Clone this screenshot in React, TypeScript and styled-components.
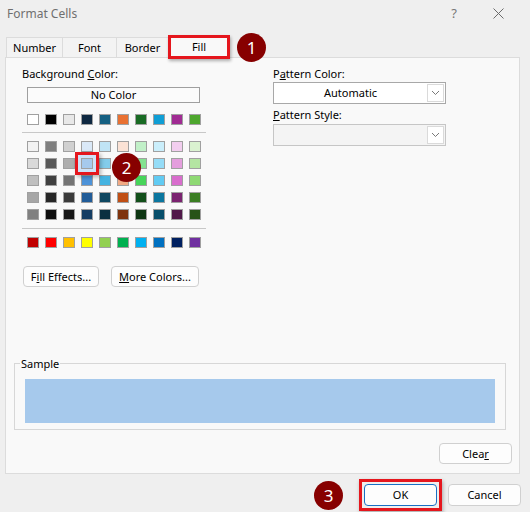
import React from 'react';
import styled, { createGlobalStyle } from 'styled-components';

const GlobalStyle = createGlobalStyle`
  html, body {
    margin: 0;
    padding: 0;
    background: #efefef;
  }
  body {
    font-family: "Noto Sans", "Open Sans", sans-serif;
    font-size: 11px;
    color: #000;
  }
  * {
    box-sizing: border-box;
  }
`;

const RED = '#e5161d';
const MARK = '#870000';

const topColors = ['#ffffff', '#000000', '#e8e8e8', '#0e2841', '#156082', '#e97132', '#196b24', '#0f9ed5', '#a02b93', '#4ea72e'];

const themeShades = [
  ['#f2f2f2', '#7f7f7f', '#d0d0d0', '#dae9f8', '#c0e4f5', '#fbe2d5', '#c1f0c8', '#caeefb', '#f2ceef', '#daf2d0'],
  ['#d9d9d9', '#595959', '#aeaeae', '#a6c9ec', '#83cceb', '#f7c7ac', '#84e291', '#95dcf7', '#e49edd', '#b4e5a2'],
  ['#bfbfbf', '#404040', '#747474', '#4d93d9', '#44b3e1', '#f1a983', '#47d45a', '#61cbf3', '#d86dcd', '#8ed973'],
  ['#a6a6a6', '#262626', '#3a3a3a', '#215c98', '#0f4761', '#c04f15', '#124f1a', '#0b769f', '#7a2370', '#3a7d22'],
  ['#808080', '#0d0d0d', '#171717', '#153d63', '#0a2f40', '#7f340e', '#0d3512', '#074e6a', '#501849', '#275317'],
];

const standardColors = ['#c00000', '#ff0000', '#ffc000', '#ffff00', '#92d050', '#00b050', '#00b0f0', '#0070c0', '#002060', '#7030a0'];

const Window = styled.div`
  width: 530px;
  height: 512px;
  background: #efefef;
  display: flex;
  flex-direction: column;
  overflow: hidden;
`;

const TitleBar = styled.div`
  height: 26px;
  display: flex;
  align-items: center;
  padding: 0 26px 0 7px;
  color: #6f6f6f;
  font-size: 12px;
`;

const HelpMark = styled.span`
  margin-left: auto;
  font-size: 13px;
  color: #777;
`;

const CloseIcon = styled.svg`
  margin-left: 36px;
  width: 11px;
  height: 11px;
`;

const TabRow = styled.div`
  height: 31px;
  display: flex;
  align-items: flex-end;
  padding-left: 6px;
`;

const Tab = styled.div<{ $w: number; $first?: boolean }>`
  width: ${(p) => p.$w}px;
  height: 20px;
  line-height: 19px;
  text-align: center;
  background: #f3f3f3;
  border: 1px solid #dcdcdc;
  border-bottom: none;
  border-left: ${(p) => (p.$first ? '1px solid #dcdcdc' : 'none')};
`;

const ActiveTab = styled.div`
  position: relative;
  z-index: 2;
  width: 62px;
  height: 24px;
  margin-left: -1px;
  margin-bottom: -2px;
  line-height: 17px;
  text-align: center;
  background: #f9f9f9;
  border: 3px solid ${RED};
  box-shadow: 1px 2px 3px rgba(0, 0, 0, 0.3);
`;

const Marker = styled.div`
  width: 29px;
  height: 29px;
  border-radius: 50%;
  background: ${MARK};
  color: #fff;
  font-size: 17px;
  line-height: 29px;
  text-align: center;
  z-index: 3;
`;

const TabMarker = styled(Marker)`
  position: relative;
  margin-left: 7px;
  margin-bottom: -5px;
`;

const GridMarker = styled(Marker)`
  position: absolute;
  left: 85px;
  top: 12px;
`;

const FooterMarker = styled(Marker)`
  margin-right: 10px;
`;

const Panel = styled.div`
  margin: 0 10px 0 5px;
  height: 417px;
  border: 1px solid #dcdcdc;
  background: #f9f9f9;
  display: flex;
  flex-direction: column;
  padding: 8px 0 9px 0;
`;

const TopSection = styled.div`
  display: grid;
  grid-template-columns: 251px 173px;
  padding-left: 16px;
`;

const Column = styled.div`
  display: flex;
  flex-direction: column;
  align-items: flex-start;
`;

const Label = styled.div<{ $gap?: number }>`
  height: 16px;
  line-height: 16px;
  margin-top: ${(p) => p.$gap ?? 0}px;
`;

const NoColorButton = styled.div`
  margin: 5px 0 0 5px;
  width: 173px;
  height: 16px;
  line-height: 14px;
  text-align: center;
  border: 1px solid #9f9f9f;
  background: #fbfbfb;
`;

const SwatchRow = styled.div<{ $gap: number }>`
  display: grid;
  grid-template-columns: repeat(10, 12px);
  grid-auto-rows: 11px;
  column-gap: 6px;
  row-gap: 6px;
  margin: ${(p) => p.$gap}px 0 0 5px;
  position: relative;
`;

const Swatch = styled.div<{ $color: string; $selected?: boolean }>`
  background: ${(p) => p.$color};
  border: 1px solid #a0a0a0;
  position: relative;
  z-index: ${(p) => (p.$selected ? 1 : 0)};
  box-shadow: ${(p) =>
    p.$selected
      ? `0 0 0 3px #cfe2f8, 0 0 0 6px ${RED}, 2px 2px 4px 6px rgba(0, 0, 0, 0.28)`
      : 'none'};
`;

const Divider = styled.div<{ $gap: number }>`
  margin-top: ${(p) => p.$gap}px;
  width: 184px;
  height: 1px;
  background: #c8c8c8;
`;

const ButtonRow = styled.div`
  display: flex;
  gap: 12px;
  margin: 18px 0 0 1px;
`;

const Button = styled.div<{ $w: number; $h?: number; $primary?: boolean }>`
  width: ${(p) => p.$w}px;
  height: ${(p) => p.$h ?? 21}px;
  line-height: ${(p) => (p.$h ?? 21) - 2}px;
  text-align: center;
  border: 1px solid ${(p) => (p.$primary ? '#1a6fc4' : '#d0d0d0')};
  border-radius: 4px;
  background: #fdfdfd;
`;

const Highlight = styled.div`
  border: 3px solid ${RED};
  padding: 2px;
  box-shadow: 1px 2px 4px rgba(0, 0, 0, 0.3);
`;

const Select = styled.div<{ $disabled?: boolean; $gap?: number }>`
  width: 173px;
  height: 22px;
  display: flex;
  margin-top: ${(p) => p.$gap ?? 0}px;
  border: 1px solid ${(p) => (p.$disabled ? '#c6c6c6' : '#a8a8a8')};
  background: ${(p) => (p.$disabled ? '#f4f4f4' : '#fff')};
`;

const SelectValue = styled.div`
  flex: 1;
  line-height: 20px;
  text-align: center;
`;

const SelectArrow = styled.div`
  width: 17px;
  margin: 1px 1px 1px 0;
  border: 1px solid #dadada;
  background: #fff;
  display: flex;
  align-items: center;
  justify-content: center;
`;

const Sample = styled.div`
  margin: auto 13px 0 8px;
  border: 1px solid #d7d7d7;
  padding: 15px 10px 6px;
  position: relative;
`;

const SampleLegend = styled.span`
  position: absolute;
  top: -8px;
  left: 5px;
  padding: 0 1px;
  line-height: 15px;
  background: #f9f9f9;
`;

const SamplePreview = styled.div<{ $color: string }>`
  height: 44px;
  background: ${(p) => p.$color};
`;

const ClearRow = styled.div`
  display: flex;
  justify-content: flex-end;
  margin-top: 13px;
  padding-right: 7px;
`;

const Footer = styled.div`
  display: flex;
  align-items: center;
  justify-content: flex-end;
  gap: 6px;
  padding: 5px 9px 0 0;
`;

const Chevron = () => (
  <svg width="9" height="6" viewBox="0 0 9 6">
    <polyline points="1,1 4.5,4.5 8,1" fill="none" stroke="#6a6a6a" strokeWidth="0.9" />
  </svg>
);

const App: React.FC = () => {
  return (
    <>
      <GlobalStyle />
      <Window>
        <TitleBar>
          Format Cells
          <HelpMark>?</HelpMark>
          <CloseIcon viewBox="0 0 11 11">
            <path d="M0.5 0.5 L10.5 10.5 M10.5 0.5 L0.5 10.5" stroke="#6a6a6a" strokeWidth="1" />
          </CloseIcon>
        </TitleBar>

        <TabRow>
          <Tab $w={57} $first>Number</Tab>
          <Tab $w={54}>Font</Tab>
          <Tab $w={52}>Border</Tab>
          <ActiveTab>Fill</ActiveTab>
          <TabMarker>1</TabMarker>
        </TabRow>

        <Panel>
          <TopSection>
            <Column>
              <Label>
                Background <u>C</u>olor:
              </Label>
              <NoColorButton>No Color</NoColorButton>
              <SwatchRow $gap={11}>
                {topColors.map((c, i) => (
                  <Swatch key={i} $color={c} />
                ))}
              </SwatchRow>
              <Divider $gap={7} />
              <SwatchRow $gap={8}>
                {themeShades.map((row, r) =>
                  row.map((c, i) => <Swatch key={`${r}-${i}`} $color={c} $selected={r === 1 && i === 3} />)
                )}
                <GridMarker>2</GridMarker>
              </SwatchRow>
              <Divider $gap={8} />
              <SwatchRow $gap={8}>
                {standardColors.map((c, i) => (
                  <Swatch key={i} $color={c} />
                ))}
              </SwatchRow>
              <ButtonRow>
                <Button $w={76}>
                  F<u>i</u>ll Effects...
                </Button>
                <Button $w={88}>
                  <u>M</u>ore Colors...
                </Button>
              </ButtonRow>
            </Column>

            <Column>
              <Label>
                P<u>a</u>ttern Color:
              </Label>
              <Select>
                <SelectValue>Automatic</SelectValue>
                <SelectArrow>
                  <Chevron />
                </SelectArrow>
              </Select>
              <Label $gap={3}>
                <u>P</u>attern Style:
              </Label>
              <Select $disabled $gap={1}>
                <SelectValue />
                <SelectArrow>
                  <Chevron />
                </SelectArrow>
              </Select>
            </Column>
          </TopSection>

          <Sample>
            <SampleLegend>Sample</SampleLegend>
            <SamplePreview $color="#a6c9ec" />
          </Sample>

          <ClearRow>
            <Button $w={73}>
              Clea<u>r</u>
            </Button>
          </ClearRow>
        </Panel>

        <Footer>
          <FooterMarker>3</FooterMarker>
          <Highlight>
            <Button $w={73} $h={22} $primary>OK</Button>
          </Highlight>
          <Button $w={73} $h={22}>Cancel</Button>
        </Footer>
      </Window>
    </>
  );
};

export default App;
